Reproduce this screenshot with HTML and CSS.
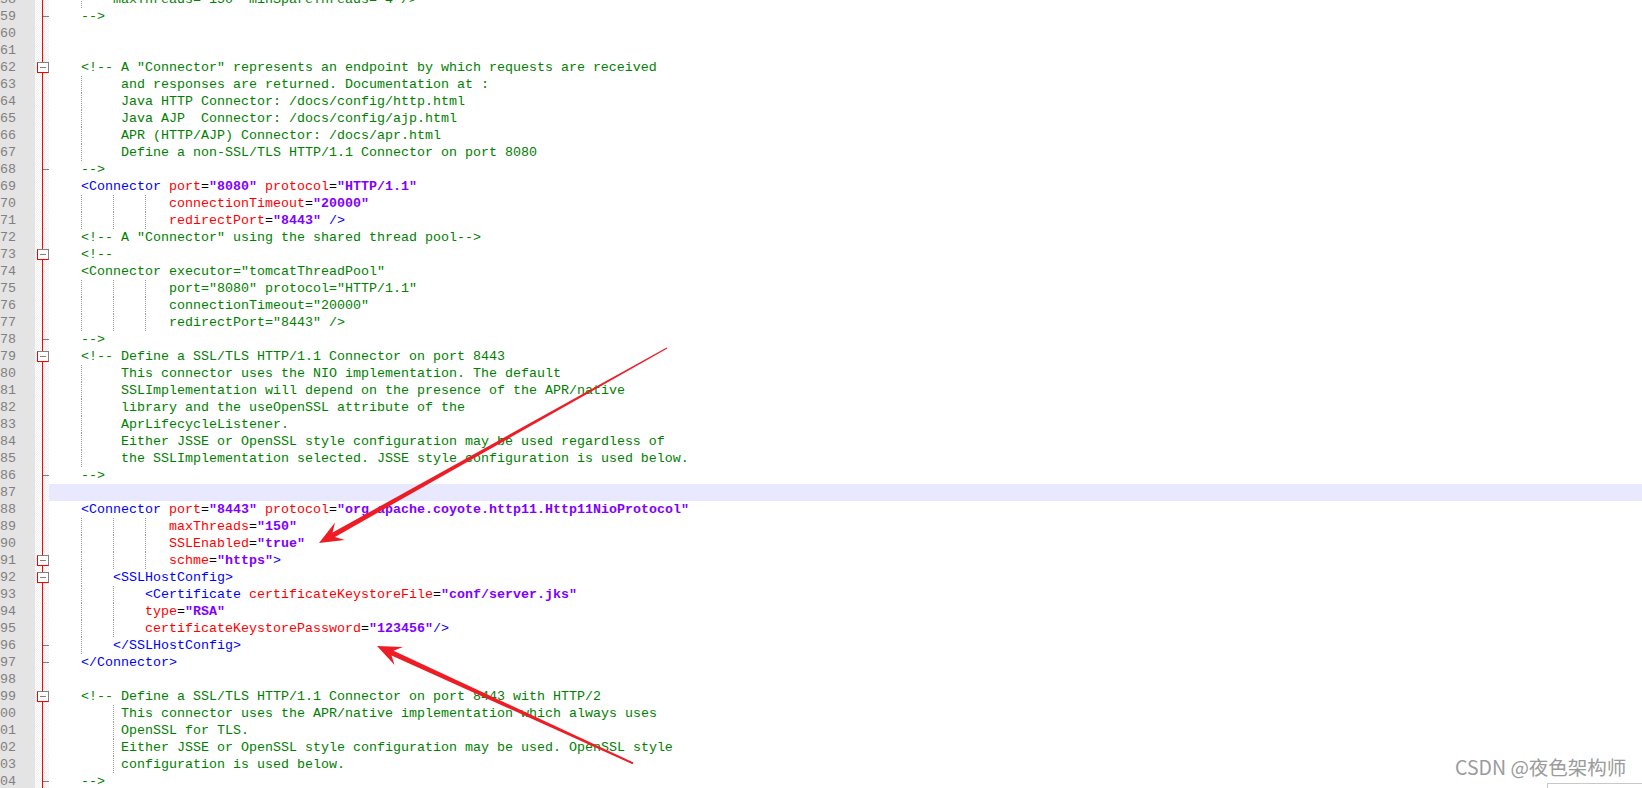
FILE: index.html
```html
<!DOCTYPE html>
<html lang="en">
<head>
<meta charset="utf-8">
<title>server.xml</title>
<link rel="stylesheet" href="styles.css">
</head>
<body>
<div class="editor">
<div class="ln"><span class="num">58</span><span class="fm"></span><span class="code c">    <i class="g"></i>    maxThreads="150" minSpareThreads="4"/&gt;</span></div>
<div class="ln"><span class="num">59</span><span class="fm end"></span><span class="code c">    --&gt;</span></div>
<div class="ln"><span class="num">60</span><span class="fm"></span><span class="code"></span></div>
<div class="ln"><span class="num">61</span><span class="fm"></span><span class="code"></span></div>
<div class="ln"><span class="num">62</span><span class="fm box"></span><span class="code c">    &lt;!-- A "Connector" represents an endpoint by which requests are received</span></div>
<div class="ln"><span class="num">63</span><span class="fm"></span><span class="code c">    <i class="g"></i>     and responses are returned. Documentation at :</span></div>
<div class="ln"><span class="num">64</span><span class="fm"></span><span class="code c">    <i class="g"></i>     Java HTTP Connector: /docs/config/http.html</span></div>
<div class="ln"><span class="num">65</span><span class="fm"></span><span class="code c">    <i class="g"></i>     Java AJP  Connector: /docs/config/ajp.html</span></div>
<div class="ln"><span class="num">66</span><span class="fm"></span><span class="code c">    <i class="g"></i>     APR (HTTP/AJP) Connector: /docs/apr.html</span></div>
<div class="ln"><span class="num">67</span><span class="fm"></span><span class="code c">    <i class="g"></i>     Define a non-SSL/TLS HTTP/1.1 Connector on port 8080</span></div>
<div class="ln"><span class="num">68</span><span class="fm end"></span><span class="code c">    --&gt;</span></div>
<div class="ln"><span class="num">69</span><span class="fm"></span><span class="code">    <span class="t">&lt;Connector</span> <span class="a">port</span>=<span class="v">"8080"</span> <span class="a">protocol</span>=<span class="v">"HTTP/1.1"</span></span></div>
<div class="ln"><span class="num">70</span><span class="fm"></span><span class="code">    <i class="g"></i>    <i class="g"></i>    <i class="g"></i>   <span class="a">connectionTimeout</span>=<span class="v">"20000"</span></span></div>
<div class="ln"><span class="num">71</span><span class="fm"></span><span class="code">    <i class="g"></i>    <i class="g"></i>    <i class="g"></i>   <span class="a">redirectPort</span>=<span class="v">"8443"</span> <span class="t">/&gt;</span></span></div>
<div class="ln"><span class="num">72</span><span class="fm"></span><span class="code c">    &lt;!-- A "Connector" using the shared thread pool--&gt;</span></div>
<div class="ln"><span class="num">73</span><span class="fm box"></span><span class="code c">    &lt;!--</span></div>
<div class="ln"><span class="num">74</span><span class="fm"></span><span class="code c">    &lt;Connector executor="tomcatThreadPool"</span></div>
<div class="ln"><span class="num">75</span><span class="fm"></span><span class="code c">    <i class="g"></i>    <i class="g"></i>    <i class="g"></i>   port="8080" protocol="HTTP/1.1"</span></div>
<div class="ln"><span class="num">76</span><span class="fm"></span><span class="code c">    <i class="g"></i>    <i class="g"></i>    <i class="g"></i>   connectionTimeout="20000"</span></div>
<div class="ln"><span class="num">77</span><span class="fm"></span><span class="code c">    <i class="g"></i>    <i class="g"></i>    <i class="g"></i>   redirectPort="8443" /&gt;</span></div>
<div class="ln"><span class="num">78</span><span class="fm end"></span><span class="code c">    --&gt;</span></div>
<div class="ln"><span class="num">79</span><span class="fm box"></span><span class="code c">    &lt;!-- Define a SSL/TLS HTTP/1.1 Connector on port 8443</span></div>
<div class="ln"><span class="num">80</span><span class="fm"></span><span class="code c">    <i class="g"></i>     This connector uses the NIO implementation. The default</span></div>
<div class="ln"><span class="num">81</span><span class="fm"></span><span class="code c">    <i class="g"></i>     SSLImplementation will depend on the presence of the APR/native</span></div>
<div class="ln"><span class="num">82</span><span class="fm"></span><span class="code c">    <i class="g"></i>     library and the useOpenSSL attribute of the</span></div>
<div class="ln"><span class="num">83</span><span class="fm"></span><span class="code c">    <i class="g"></i>     AprLifecycleListener.</span></div>
<div class="ln"><span class="num">84</span><span class="fm"></span><span class="code c">    <i class="g"></i>     Either JSSE or OpenSSL style configuration may be used regardless of</span></div>
<div class="ln"><span class="num">85</span><span class="fm"></span><span class="code c">    <i class="g"></i>     the SSLImplementation selected. JSSE style configuration is used below.</span></div>
<div class="ln"><span class="num">86</span><span class="fm end"></span><span class="code c">    --&gt;</span></div>
<div class="ln"><span class="num">87</span><span class="fm"></span><span class="code cur"></span></div>
<div class="ln"><span class="num">88</span><span class="fm"></span><span class="code">    <span class="t">&lt;Connector</span> <span class="a">port</span>=<span class="v">"8443"</span> <span class="a">protocol</span>=<span class="v">"org.apache.coyote.http11.Http11NioProtocol"</span></span></div>
<div class="ln"><span class="num">89</span><span class="fm"></span><span class="code">    <i class="g"></i>    <i class="g"></i>    <i class="g"></i>   <span class="a">maxThreads</span>=<span class="v">"150"</span></span></div>
<div class="ln"><span class="num">90</span><span class="fm"></span><span class="code">    <i class="g"></i>    <i class="g"></i>    <i class="g"></i>   <span class="a">SSLEnabled</span>=<span class="v">"true"</span></span></div>
<div class="ln"><span class="num">91</span><span class="fm box"></span><span class="code">    <i class="g"></i>    <i class="g"></i>    <i class="g"></i>   <span class="a">schme</span>=<span class="v">"https"</span><span class="t">&gt;</span></span></div>
<div class="ln"><span class="num">92</span><span class="fm box"></span><span class="code">    <i class="g"></i>    <span class="t">&lt;SSLHostConfig&gt;</span></span></div>
<div class="ln"><span class="num">93</span><span class="fm"></span><span class="code">    <i class="g"></i>    <i class="g"></i>    <span class="t">&lt;Certificate</span> <span class="a">certificateKeystoreFile</span>=<span class="v">"conf/server.jks"</span></span></div>
<div class="ln"><span class="num">94</span><span class="fm"></span><span class="code">    <i class="g"></i>    <i class="g"></i>    <span class="a">type</span>=<span class="v">"RSA"</span></span></div>
<div class="ln"><span class="num">95</span><span class="fm"></span><span class="code">    <i class="g"></i>    <i class="g"></i>    <span class="a">certificateKeystorePassword</span>=<span class="v">"123456"</span><span class="t">/&gt;</span></span></div>
<div class="ln"><span class="num">96</span><span class="fm end"></span><span class="code">    <i class="g"></i>    <span class="t">&lt;/SSLHostConfig&gt;</span></span></div>
<div class="ln"><span class="num">97</span><span class="fm end"></span><span class="code">    <span class="t">&lt;/Connector&gt;</span></span></div>
<div class="ln"><span class="num">98</span><span class="fm"></span><span class="code"></span></div>
<div class="ln"><span class="num">99</span><span class="fm box"></span><span class="code c">    &lt;!-- Define a SSL/TLS HTTP/1.1 Connector on port 8443 with HTTP/2</span></div>
<div class="ln"><span class="num">100</span><span class="fm"></span><span class="code c">        <i class="g"></i> This connector uses the APR/native implementation which always uses</span></div>
<div class="ln"><span class="num">101</span><span class="fm"></span><span class="code c">        <i class="g"></i> OpenSSL for TLS.</span></div>
<div class="ln"><span class="num">102</span><span class="fm"></span><span class="code c">        <i class="g"></i> Either JSSE or OpenSSL style configuration may be used. OpenSSL style</span></div>
<div class="ln"><span class="num">103</span><span class="fm"></span><span class="code c">        <i class="g"></i> configuration is used below.</span></div>
<div class="ln"><span class="num">104</span><span class="fm end"></span><span class="code c">    --&gt;</span></div>
<div class="ln"><span class="num">105</span><span class="fm"></span><span class="code"></span></div>
</div>

<svg class="arrows" width="1642" height="788" viewBox="0 0 1642 788" xmlns="http://www.w3.org/2000/svg">
  <polygon fill="#ee1c25" points="319,543 344.8,540 335,536.9 667.3,348.6 666.7,347.4 332.6,532.5 335,522.6"/>
  <polygon fill="#ee1c25" points="377,646 403,646.9 393.5,650.8 633.5,762.4 632.5,764.2 391.5,655.4 394.6,665.1"/>
</svg>

<div class="watermark">CSDN @夜色架构师</div>
<div class="corner-box"></div>
</body>
</html>
```

FILE: styles.css
```css
html, body {
  margin: 0;
  padding: 0;
  background: #ffffff;
  overflow: hidden;
  width: 1642px;
  height: 788px;
}

body {
  position: relative;
  font-family: "Liberation Mono", "Courier New", monospace;
  font-size: 13.333px;
}

.editor {
  margin-top: -9px;
  margin-left: -8px;
  display: flex;
  flex-direction: column;
}

.ln {
  display: flex;
  height: 17px;
  line-height: 17px;
}

.num {
  flex: 0 0 43px;
  box-sizing: border-box;
  padding-right: 19px;
  text-align: right;
  background: #e4e4e4;
  color: #808080;
}

.fm {
  flex: 0 0 14px;
  display: flex;
  align-items: center;
  background-color: #ffffff;
  background-image:
    linear-gradient(to right, transparent 7px, #ff0000 7px, #ff0000 8px, transparent 8px),
    repeating-conic-gradient(#efefef 0 25%, #ffffff 0 50%);
  background-size: 14px 17px, 2px 2px;
  background-repeat: no-repeat, repeat;
}

.fm.box::before {
  content: "";
  box-sizing: border-box;
  width: 12px;
  height: 11px;
  margin-left: 2px;
  border: 1px solid #808080;
  border-left-color: #ff0000;
  border-bottom-color: #ff0000;
  background: #ffffff linear-gradient(#808080, #808080) center / 6px 1px no-repeat;
}

.fm.end::before {
  content: "";
  width: 6px;
  height: 1px;
  margin-left: 8px;
  background: #808080;
}

.code {
  flex: 1 1 auto;
  white-space: pre;
  color: #000000;
}

.code.cur {
  background: #e8e8ff;
}

.g {
  display: inline-block;
  width: 1px;
  margin-right: -1px;
  height: 17px;
  vertical-align: top;
  background: linear-gradient(#9a9a9a 50%, transparent 50%) 0 0 / 1px 2px repeat-y;
}

.c { color: #008000; }
.t { color: #0000ff; }
.a { color: #ff0000; }
.v { color: #8000ff; font-weight: bold; }

.arrows {
  position: absolute;
  left: 0;
  top: 0;
  pointer-events: none;
}

.watermark {
  position: absolute;
  left: 1455px;
  top: 753px;
  font-family: "Noto Sans CJK SC", "Noto Sans", sans-serif;
  font-size: 19.5px;
  line-height: 28px;
  color: #9b9b9b;
  text-shadow: 0 0 1px #ffffff;
  white-space: nowrap;
}

.corner-box {
  position: absolute;
  left: 1547px;
  top: 783px;
  width: 100px;
  height: 20px;
  border: 1px solid #c8c8c8;
  background: #ffffff;
}
```
